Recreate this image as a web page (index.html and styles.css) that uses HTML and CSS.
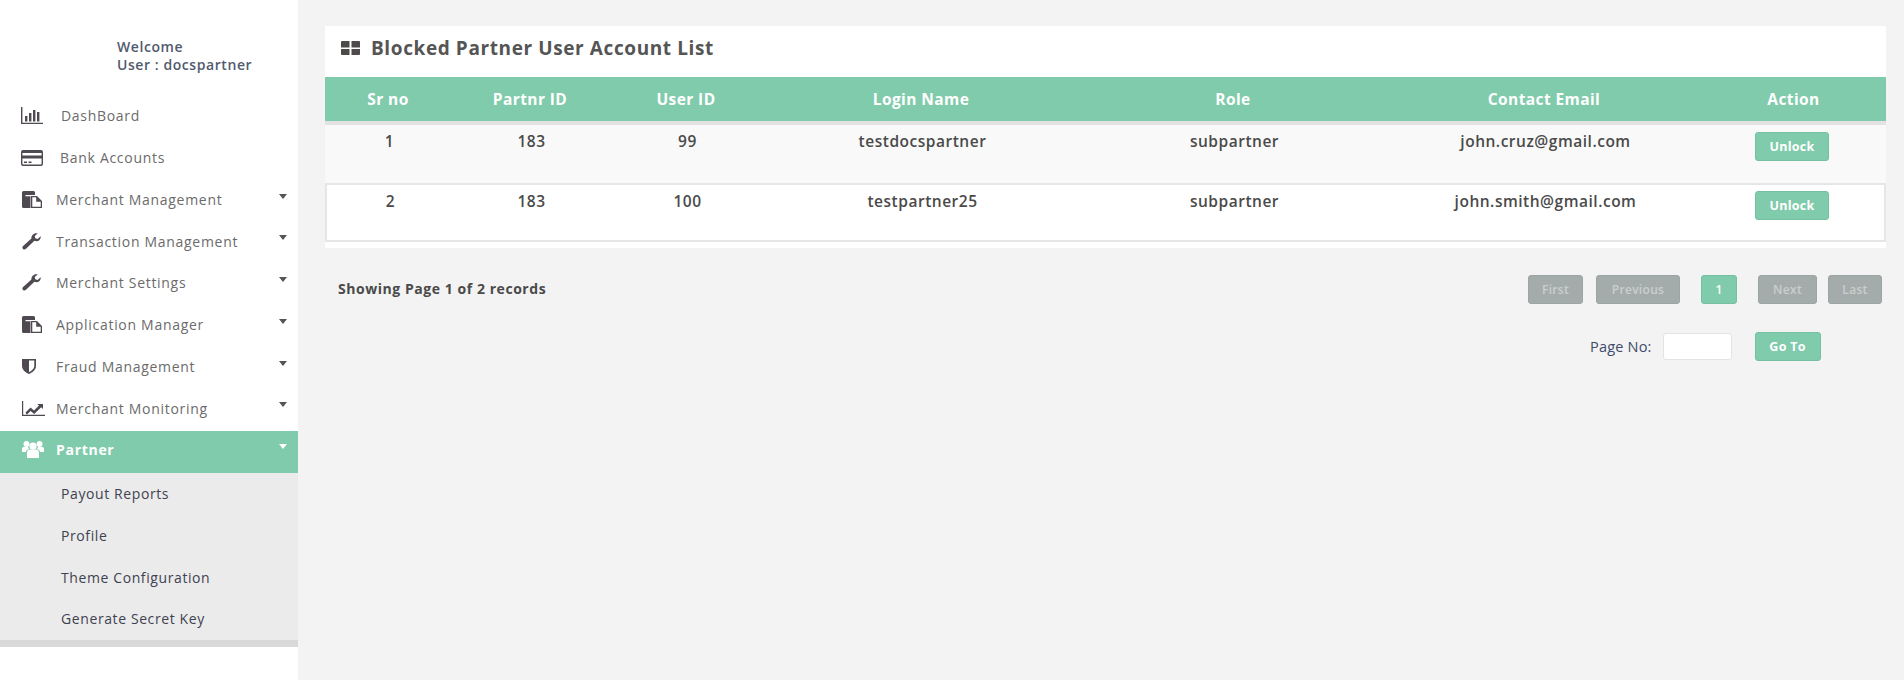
FILE: index.html
```html
<!DOCTYPE html>
<html lang="en">
<head>
<meta charset="utf-8">
<title>Blocked Partner User Account List</title>
<link rel="stylesheet" href="styles.css">
</head>
<body>
<svg class="sprite" width="0" height="0" aria-hidden="true">
  <symbol id="i-chart" viewBox="0 0 24 18"><path d="M1 0h1.4v15.8H23V17H1z"/><path d="M5 9h2.400v5.500H5zM9 6h2.400v8.500H9zM13 3h2.400v11.500H13zM17 5h2.400v9.500H17z"/></symbol>
  <symbol id="i-card" viewBox="0 0 22 16"><path fill-rule="evenodd" d="M2 0h18a2 2 0 0 1 2 2v12a2 2 0 0 1-2 2H2a2 2 0 0 1-2-2V2a2 2 0 0 1 2-2zm-.6 3v2.500h19.200V3zm0 5.500V14l.6.600h18l.6-.6V8.500zM3 11.500h3V13H3zm4.500 0h3V13h-3z"/></symbol>
  <symbol id="i-copy" viewBox="0 0 20 17"><path d="M1.500 0h10a1.500 1.500 0 0 1 1.500 1.500V4H3.500v1.200H8.500V17H1.500A1.500 1.500 0 0 1 0 15.500v-14A1.500 1.500 0 0 1 1.500 0z"/><path fill-rule="evenodd" d="M9 5h6l5 5v7H9zm1.300 1.300v9.400h8.400v-4.900h-4.500V6.300z"/></symbol>
  <symbol id="i-wrench" viewBox="0 0 19 17"><path d="M18.700 3.200c.5 2.400-1.500 5-4.300 5-.7 0-1.400-.1-2-.4L4 15.700c-.9.900-2.100 1.100-3 .3s-.8-2.200.1-3.100l8.300-7.400c-.3-2.600 1.900-5.300 4.700-5.300.6 0 1.100.1 1.600.3l-3 2.500.6 2.300 2.300.6z"/></symbol>
  <symbol id="i-shield" viewBox="0 0 14 16"><path fill-rule="evenodd" d="M0 1h14v7c0 4-4 6.800-7 8-3-1.200-7-4-7-8zm7 1.600v11.600c2-1 5.300-3.200 5.300-6.200V2.600z"/></symbol>
  <symbol id="i-line" viewBox="0 0 23 15"><path d="M0 0h1.200v13.800H23V15H0z"/><path d="M3.500 11.500l5-5 3.500 3 5-5-1.800-1.500H21v5l-1.800-1.700-7 6.700-3.600-3-3.800 3.800z"/></symbol>
  <symbol id="i-users" viewBox="0 0 22 17"><circle cx="11" cy="5.200" r="3.600"/><circle cx="4.500" cy="3" r="3"/><circle cx="17.500" cy="3" r="3"/><path d="M5 17V11.500c0-2 1.500-3 3-3h6c1.500 0 3 1 3 3V17z"/><path d="M0 11V8c0-1.500 1-2.300 2.300-2.300h3.500c.2 1 .7 1.800 1.500 2.300-2 .4-3 1.300-3.300 3z"/><path d="M22 11V8c0-1.500-1-2.300-2.300-2.300h-3.500c-.2 1-.7 1.800-1.500 2.300 2 .4 3 1.300 3.300 3z"/></symbol>
  <symbol id="i-grid" viewBox="0 0 19 14"><path d="M1 0h7.500v6.400H0V1a1 1 0 0 1 1-1zM10.500 0H18a1 1 0 0 1 1 1v5.400h-8.500zM0 7.900h8.500V14H1a1 1 0 0 1-1-1zM10.500 7.900H19V13a1 1 0 0 1-1 1h-7.500z"/></symbol>
</svg>

<div class="layout">
  <aside class="sidebar">
    <div class="welcome">
      <div>Welcome</div>
      <div>User : docspartner</div>
    </div>
    <nav class="menu">
      <a class="item"><svg class="ic ic-chart"><use href="#i-chart"/></svg><span class="label">DashBoard</span></a>
      <a class="item"><svg class="ic ic-card"><use href="#i-card"/></svg><span class="label">Bank Accounts</span></a>
      <a class="item"><svg class="ic ic-copy"><use href="#i-copy"/></svg><span class="label">Merchant Management</span><i class="caret"></i></a>
      <a class="item"><svg class="ic ic-wrench"><use href="#i-wrench"/></svg><span class="label">Transaction Management</span><i class="caret"></i></a>
      <a class="item"><svg class="ic ic-wrench"><use href="#i-wrench"/></svg><span class="label">Merchant Settings</span><i class="caret"></i></a>
      <a class="item"><svg class="ic ic-copy"><use href="#i-copy"/></svg><span class="label">Application Manager</span><i class="caret"></i></a>
      <a class="item"><svg class="ic ic-shield"><use href="#i-shield"/></svg><span class="label">Fraud Management</span><i class="caret"></i></a>
      <a class="item"><svg class="ic ic-line"><use href="#i-line"/></svg><span class="label">Merchant Monitoring</span><i class="caret"></i></a>
      <a class="item active"><svg class="ic ic-users"><use href="#i-users"/></svg><span class="label">Partner</span><i class="caret"></i></a>
      <div class="submenu">
        <a class="subitem">Payout Reports</a>
        <a class="subitem">Profile</a>
        <a class="subitem">Theme Configuration</a>
        <a class="subitem">Generate Secret Key</a>
      </div>
    </nav>
  </aside>

  <main class="main">
    <section class="panel">
      <h1 class="title"><svg class="ic-grid"><use href="#i-grid"/></svg>Blocked Partner User Account List</h1>
      <table class="grid">
        <thead>
          <tr>
            <th class="c1">Sr no</th><th class="c2">Partnr ID</th><th class="c3">User ID</th><th class="c4">Login Name</th><th class="c5">Role</th><th class="c6">Contact Email</th><th class="c7">Action</th>
          </tr>
        </thead>
        <tbody>
          <tr class="odd">
            <td>1</td><td>183</td><td>99</td><td>testdocspartner</td><td>subpartner</td><td>john.cruz@gmail.com</td><td class="act"><button class="btn">Unlock</button></td>
          </tr>
          <tr class="even">
            <td>2</td><td>183</td><td>100</td><td>testpartner25</td><td>subpartner</td><td>john.smith@gmail.com</td><td class="act"><button class="btn">Unlock</button></td>
          </tr>
        </tbody>
      </table>
    </section>

    <div class="pager-row">
      <div class="showing">Showing Page 1 of 2 records</div>
      <div class="pager">
        <button class="btn pg pg-off w-first">First</button>
        <button class="btn pg pg-off w-prev">Previous</button>
        <button class="btn pg w-cur">1</button>
        <button class="btn pg pg-off w-next">Next</button>
        <button class="btn pg pg-off w-last">Last</button>
      </div>
    </div>

    <div class="goto-row">
      <label class="goto-label" for="pageNo">Page No:</label>
      <input class="goto-input" id="pageNo" type="text">
      <button class="btn goto-btn">Go To</button>
    </div>
  </main>
</div>
</body>
</html>
```

FILE: styles.css
```css
* { box-sizing: border-box; }
html, body { margin: 0; height: 100%; }
body {
  background: #f3f3f3;
  font-family: "Open Sans", "Noto Sans", sans-serif;
  font-size: 14px;
  color: #4a4a4a;
  overflow: hidden;
}
.sprite { position: absolute; }
.layout { display: flex; height: 680px; }

/* sidebar */
.sidebar { width: 298px; flex: none; background: #fff; }
.welcome {
  height: 97px;
  padding: 38px 0 0 117px;
  font-size: 14px;
  font-weight: 600;
  line-height: 18px;
  letter-spacing: .57px;
  color: #525a6e;
}
.item {
  display: flex;
  align-items: center;
  height: 41.75px;
  padding: 0 0 4px 20px;
  color: #6b6b6b;
  font-size: 14px;
  letter-spacing: .7px;
  position: relative;
}
.ic { fill: #4f4a52; flex: none; }
.label { margin-left: 11px; }
.ic-chart { width: 24px; height: 18px; }
.ic-chart + .label { margin-left: 17px; }
.ic-card { width: 22px; height: 16px; margin-left: 1px; }
.ic-card + .label { margin-left: 17px; }
.ic-copy { width: 20px; height: 17px; margin: 0 3px 0 2px; }
.ic-wrench { width: 19px; height: 17px; margin: 0 4px 0 2px; }
.ic-shield { width: 14px; height: 16px; margin: 0 9px 0 2px; }
.ic-line { width: 23px; height: 15px; margin-left: 2px; }
.ic-users { width: 22px; height: 17px; margin: 0 1px 0 2px; }
.caret {
  position: absolute;
  left: 279px;
  top: 13px;
  border-left: 4.500px solid transparent;
  border-right: 4.500px solid transparent;
  border-top: 5px solid #555;
}
.active { background: #80cbab; color: #fff; font-weight: 700; }
.active .ic { fill: #fff; }
.active .caret { border-top-color: #fff; }
.submenu {
  background: #ebebeb;
  border-bottom: 7px solid #d9d9d9;
}
.subitem {
  display: flex;
  align-items: center;
  height: 41.75px;
  padding-left: 61px;
  color: #3f4250;
  font-size: 14px;
  letter-spacing: .6px;
}

/* main */
.main { flex: 1; padding: 26px 18px 0 27px; min-width: 0; }
.panel { background: #fff; padding-bottom: 6px; }
.title {
  display: flex;
  align-items: center;
  height: 51px;
  margin: 0;
  padding: 0 0 8px 16px;
  font-size: 19px;
  font-weight: 700;
  letter-spacing: .6px;
  color: #555;
}
.ic-grid { width: 19px; height: 14px; fill: #4f4a4a; margin-right: 11px; }
.grid { width: 100%; border-collapse: separate; border-spacing: 0; table-layout: fixed; }
.c1 { width: 126px; }
.c2 { width: 158px; }
.c3 { width: 154px; }
.c4 { width: 316px; }
.c5 { width: 308px; }
.c6 { width: 314px; }
.c7 { width: 185px; }
th {
  height: 48px;
  background: #80cbab;
  border-bottom: 4px solid #e3e3e3;
  color: #fff;
  font-size: 15.500px;
  font-weight: 700;
  letter-spacing: .4px;
  text-align: center;
  padding: 0;
}
td {
  text-align: center;
  vertical-align: top;
  color: #4a4a4a;
  font-size: 15.500px;
  font-weight: 600;
  letter-spacing: .52px;
  line-height: 20px;
}
.odd td { background: #f9f9f9; height: 58px; padding: 6px 0 0 3px; }
.even td {
  background: #fff;
  height: 59px;
  padding: 6px 0 0 3px;
  border-top: 2px solid #e6e6e6;
  border-bottom: 2px solid #e6e6e6;
}
.even td:first-child { border-left: 2px solid #e6e6e6; }
.even td:last-child { border-right: 2px solid #e6e6e6; }
.odd td.act { padding: 7px 3px 0 0; }
.even td.act { padding: 6px 1px 0 0; }

/* buttons */
.btn {
  display: block;
  height: 29px;
  border: 1px solid #74c0a0;
  border-radius: 3px;
  background: #80cbab;
  color: #fff;
  font-family: inherit;
  font-size: 12.500px;
  font-weight: 700;
  letter-spacing: .3px;
  padding: 0;
}
td .btn { width: 74px; margin: 0 auto; }

/* pagination */
.pager-row {
  display: flex;
  justify-content: space-between;
  align-items: flex-start;
  padding: 27px 4px 0 13px;
}
.showing {
  font-size: 14px;
  font-weight: 700;
  letter-spacing: .55px;
  color: #4a4a4a;
  line-height: 27px;
}
.pager { display: flex; }
.pg { font-size: 12px; font-weight: 600; }
.pg-off { background: #a4acab; border-color: #9ca5a3; color: #c9cfce; }
.w-first { width: 55px; margin-right: 13px; }
.w-prev { width: 84px; margin-right: 21px; }
.w-cur { width: 36px; margin-right: 21px; }
.w-next { width: 59px; margin-right: 11px; }
.w-last { width: 54px; }

.goto-row {
  display: flex;
  align-items: center;
  padding: 28px 0 0 1265px;
}
.goto-label { font-size: 14.500px; color: #3d4a6b; letter-spacing: .2px; }
.goto-input {
  width: 69px;
  height: 27px;
  margin-left: 11px;
  border: 1px solid #e3e3e3;
  border-radius: 3px;
  background: #fff;
}
.goto-btn { width: 66px; margin-left: 23px; }
```
